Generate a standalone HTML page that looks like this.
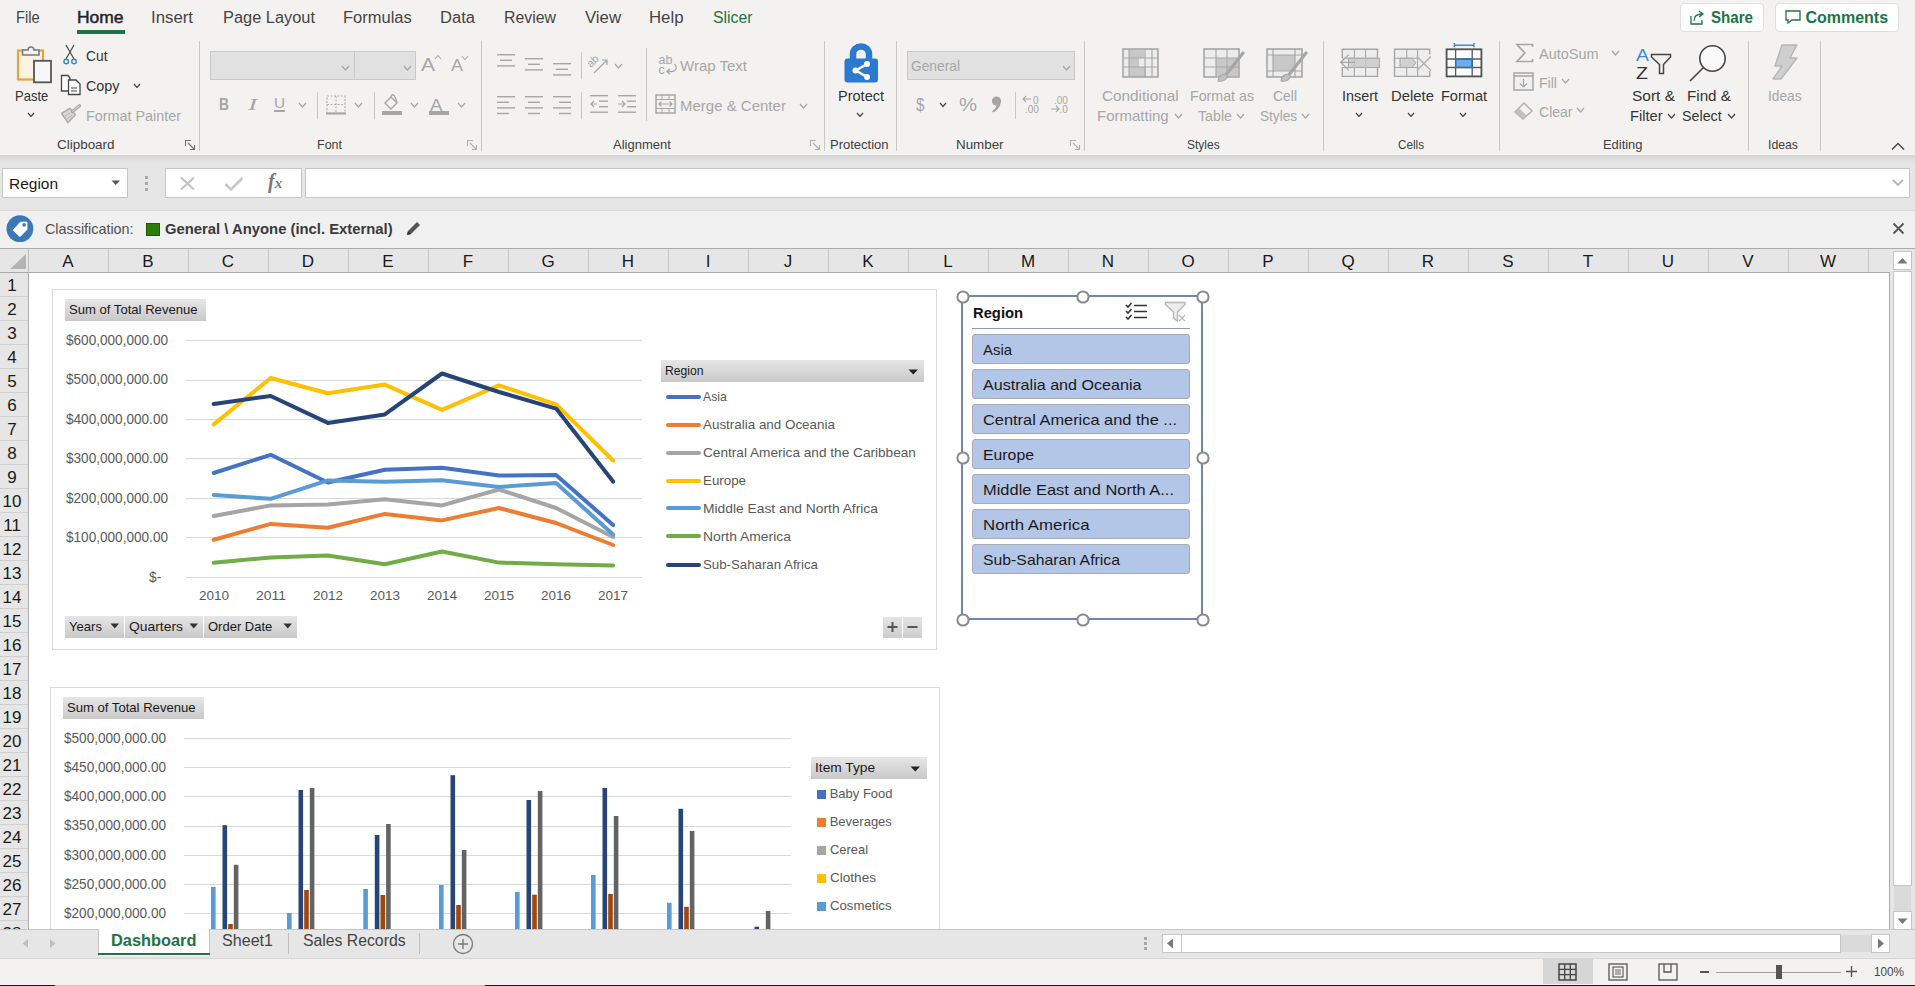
<!DOCTYPE html><html><head><meta charset="utf-8"><style>
html,body{margin:0;padding:0;width:1915px;height:986px;overflow:hidden;background:#fff;}
body{position:relative;font-family:"Liberation Sans",sans-serif;}
div,svg{position:absolute;box-sizing:border-box;}
.t{white-space:nowrap;}
</style></head><body>
<div style="left:0px;top:0px;width:1915px;height:155px;background:#f3f2f1;"></div>
<div style="left:0px;top:155px;width:1915px;height:56px;background:linear-gradient(#d2d2d2 0px,#dedede 4px,#e6e6e6 9px,#e6e6e6 100%);"></div>
<div style="left:0px;top:210px;width:1915px;height:38px;background:#f0f0f0;border-top:1px solid #dadada;"></div>
<div style="left:0px;top:248px;width:1915px;height:25px;background:#e6e6e6;border-top:1px solid #ababab;"></div>
<div style="left:28px;top:272px;width:1862px;height:658px;background:#fff;"></div>
<div style="left:0px;top:272px;width:28px;height:658px;background:#e6e6e6;"></div>
<div style="left:1889px;top:249px;width:26px;height:681px;background:#e6e6e6;"></div>
<div class="t" style="left:16.30px;top:8.52px;font-size:16px;line-height:18.38px;color:#444444;font-weight:400;transform:scaleX(0.9186);transform-origin:0 0;">File</div>
<div class="t" style="left:151.00px;top:8.52px;font-size:16px;line-height:18.38px;color:#444444;font-weight:400;transform:scaleX(1.0500);transform-origin:0 0;">Insert</div>
<div class="t" style="left:222.50px;top:8.52px;font-size:16px;line-height:18.38px;color:#444444;font-weight:400;transform:scaleX(1.0234);transform-origin:0 0;">Page Layout</div>
<div class="t" style="left:343.00px;top:8.52px;font-size:16px;line-height:18.38px;color:#444444;font-weight:400;transform:scaleX(1.0315);transform-origin:0 0;">Formulas</div>
<div class="t" style="left:440.00px;top:8.52px;font-size:16px;line-height:18.38px;color:#444444;font-weight:400;transform:scaleX(1.0355);transform-origin:0 0;">Data</div>
<div class="t" style="left:504.00px;top:8.52px;font-size:16px;line-height:18.38px;color:#444444;font-weight:400;transform:scaleX(0.9905);transform-origin:0 0;">Review</div>
<div class="t" style="left:585.00px;top:8.52px;font-size:16px;line-height:18.38px;color:#444444;font-weight:400;transform:scaleX(1.0465);transform-origin:0 0;">View</div>
<div class="t" style="left:649.00px;top:8.52px;font-size:16px;line-height:18.38px;color:#444444;font-weight:400;transform:scaleX(1.0486);transform-origin:0 0;">Help</div>
<div class="t" style="left:77.00px;top:8.52px;font-size:16px;line-height:18.38px;color:#262626;font-weight:400;transform:scaleX(1.0913);transform-origin:0 0;-webkit-text-stroke:0.45px #262626;">Home</div>
<div style="left:77px;top:30px;width:48px;height:4px;background:#217346;"></div>
<div class="t" style="left:712.60px;top:8.52px;font-size:16px;line-height:18.38px;color:#217346;font-weight:400;transform:scaleX(0.9850);transform-origin:0 0;">Slicer</div>
<div style="left:1680px;top:3px;width:84px;height:29px;background:#fff;border:1px solid #e1dfdd;border-radius:4px;"></div>
<div class="t" style="left:1710.70px;top:8.52px;font-size:16px;line-height:18.38px;color:#217346;font-weight:700;transform:scaleX(0.9438);transform-origin:0 0;">Share</div>
<svg style="left:1688px;top:8px;" width="18" height="18" viewBox="0 0 18 18"><path d="M3 8 V16 H14 V12" fill="none" stroke="#217346" stroke-width="1.3"/><path d="M6 13 C6 8 9 6 14 6 M11 3 L15 6 L11 9" fill="none" stroke="#217346" stroke-width="1.3"/></svg>
<div style="left:1775px;top:3px;width:124px;height:29px;background:#fff;border:1px solid #e1dfdd;border-radius:4px;"></div>
<div class="t" style="left:1805.40px;top:8.52px;font-size:16px;line-height:18.38px;color:#217346;font-weight:700;">Comments</div>
<svg style="left:1784px;top:8px;" width="18" height="18" viewBox="0 0 18 18"><path d="M2 3 H16 V12 H8 L4 15 V12 H2 Z" fill="none" stroke="#217346" stroke-width="1.3"/></svg>
<div style="left:199px;top:41px;width:1px;height:110px;background:#c8c6c4;"></div>
<div style="left:481px;top:41px;width:1px;height:110px;background:#c8c6c4;"></div>
<div style="left:824px;top:41px;width:1px;height:110px;background:#c8c6c4;"></div>
<div style="left:896px;top:41px;width:1px;height:110px;background:#c8c6c4;"></div>
<div style="left:1084px;top:41px;width:1px;height:110px;background:#c8c6c4;"></div>
<div style="left:1323px;top:41px;width:1px;height:110px;background:#c8c6c4;"></div>
<div style="left:1499px;top:41px;width:1px;height:110px;background:#c8c6c4;"></div>
<div style="left:1748px;top:41px;width:1px;height:110px;background:#c8c6c4;"></div>
<div style="left:1820px;top:41px;width:1px;height:110px;background:#c8c6c4;"></div>
<svg style="left:14px;top:43px;" width="40" height="42" viewBox="0 0 40 42"><rect x="4" y="7.5" width="25" height="29" fill="#fdf3e3" stroke="#e8a33d" stroke-width="2.2"/>
<path d="M8.5 12 V7 H14 A3 3 0 0 1 20 7 H25 V12 Z" fill="#f3f2f1" stroke="#7a7a7a" stroke-width="1.6"/>
<rect x="20" y="17.8" width="17" height="21.5" fill="#f7f7f7" stroke="#555" stroke-width="1.8"/></svg>
<div class="t" style="left:14.50px;top:87.42px;font-size:15px;line-height:17.23px;color:#333333;font-weight:400;transform:scaleX(0.8672);transform-origin:0 0;">Paste</div>
<svg style="left:26.5px;top:111.5px;" width="8" height="5.5" viewBox="0 0 8 5.5"><path d="M1 1 L4.0 4.5 L7 1" fill="none" stroke="#444" stroke-width="1.2"/></svg>
<svg style="left:62px;top:44px;" width="18" height="22" viewBox="0 0 18 22"><path d="M4 1 L12 15 M12 1 L4 15" stroke="#444" stroke-width="1.2" fill="none"/>
<circle cx="4.2" cy="17.5" r="2.3" fill="none" stroke="#3a87c8" stroke-width="1.4"/>
<circle cx="12" cy="17.5" r="2.3" fill="none" stroke="#3a87c8" stroke-width="1.4"/></svg>
<div class="t" style="left:85.50px;top:47.42px;font-size:15px;line-height:17.23px;color:#333333;font-weight:400;transform:scaleX(0.9227);transform-origin:0 0;">Cut</div>
<svg style="left:60px;top:74px;" width="22" height="22" viewBox="0 0 22 22"><path d="M1.5 1.5 H8 L10 4 V17 H1.5 Z" fill="#fff" stroke="#444" stroke-width="1.3"/>
<path d="M8.5 6 H16 L20 10 V20.5 H8.5 Z" fill="#fff" stroke="#444" stroke-width="1.3"/>
<path d="M11 14 H17 M11 17 H17" stroke="#444" stroke-width="1.1"/></svg>
<div class="t" style="left:85.50px;top:77.42px;font-size:15px;line-height:17.23px;color:#333333;font-weight:400;transform:scaleX(0.9571);transform-origin:0 0;">Copy</div>
<svg style="left:132.5px;top:82.5px;" width="8" height="5.5" viewBox="0 0 8 5.5"><path d="M1 1 L4.0 4.5 L7 1" fill="none" stroke="#444" stroke-width="1.2"/></svg>
<svg style="left:60px;top:103px;" width="23" height="21" viewBox="0 0 23 21"><path d="M1.6 10.4 L9.8 5.3 L15.5 11.6 L8 19.8 Z" fill="#d6d6d6" stroke="#a6a6a6" stroke-width="1.3" stroke-linejoin="round"/>
<path d="M4.5 13.5 L10.5 9.5 M6.5 16.5 L12.5 12" stroke="#b4b4b4" stroke-width="1"/>
<path d="M12.5 8.5 L19.5 2.8" stroke="#a6a6a6" stroke-width="3.2" stroke-linecap="round"/>
<path d="M12.8 8.2 L19.3 3" stroke="#e6e6e6" stroke-width="1" stroke-linecap="round"/></svg>
<div class="t" style="left:85.50px;top:107.42px;font-size:15px;line-height:17.23px;color:#a6a6a6;font-weight:400;transform:scaleX(0.9577);transform-origin:0 0;">Format Painter</div>
<div class="t" style="left:57.05px;top:137.74px;font-size:13px;line-height:14.94px;color:#404040;font-weight:400;transform:scaleX(1.0342);transform-origin:0 0;">Clipboard</div>
<svg style="left:185px;top:140px;" width="11" height="11" viewBox="0 0 11 11"><path d="M0.5 6 V0.5 H6 M3 3 L9.5 9.5 M5 9.5 H9.5 V5" fill="none" stroke="#707070" stroke-width="1.1"/></svg>
<div style="left:210px;top:51px;width:145px;height:29px;background:#e1e1e1;border:1px solid #c8c8c8;"></div>
<div style="left:354px;top:51px;width:62px;height:29px;background:#e1e1e1;border:1px solid #c8c8c8;"></div>
<svg style="left:341px;top:65px;" width="9" height="6" viewBox="0 0 9 6"><path d="M1 1 L4.5 5 L8 1" fill="none" stroke="#a6a6a6" stroke-width="1.2"/></svg>
<svg style="left:403px;top:65px;" width="9" height="6" viewBox="0 0 9 6"><path d="M1 1 L4.5 5 L8 1" fill="none" stroke="#a6a6a6" stroke-width="1.2"/></svg>
<div class="t" style="left:421.00px;top:54.30px;font-size:19px;line-height:21.83px;color:#a6a6a6;font-weight:400;transform:scaleX(1.1024);transform-origin:0 0;">A</div>
<svg style="left:434px;top:54px;" width="8" height="6" viewBox="0 0 8 6"><path d="M1 5 L4 1.5 L7 5" fill="none" stroke="#a6a6a6" stroke-width="1.1"/></svg>
<div class="t" style="left:451.00px;top:57.02px;font-size:16px;line-height:18.38px;color:#a6a6a6;font-weight:400;transform:scaleX(1.1215);transform-origin:0 0;">A</div>
<svg style="left:461px;top:55px;" width="8" height="6" viewBox="0 0 8 6"><path d="M1 1 L4 4.5 L7 1" fill="none" stroke="#a6a6a6" stroke-width="1.1"/></svg>
<div class="t" style="left:219.00px;top:95.52px;font-size:16px;line-height:18.38px;color:#a6a6a6;font-weight:700;transform:scaleX(0.8621);transform-origin:0 0;">B</div>
<div class="t" style="left:248.00px;top:95.52px;font-size:16px;line-height:18.38px;color:#a6a6a6;font-weight:400;transform:scaleX(1.7273);transform-origin:0 0;font-style:italic;font-family:'Liberation Serif',serif;">I</div>
<div class="t" style="left:274.00px;top:94.42px;font-size:15px;line-height:17.23px;color:#a6a6a6;font-weight:400;transform:scaleX(1.0185);transform-origin:0 0;">U</div>
<div style="left:274px;top:110px;width:11px;height:1.5px;background:#a6a6a6;"></div>
<svg style="left:298px;top:102px;" width="9" height="6" viewBox="0 0 9 6"><path d="M1 1 L4.5 5 L8 1" fill="none" stroke="#a6a6a6" stroke-width="1.2"/></svg>
<div style="left:317px;top:92px;width:1px;height:27px;background:#c8c6c4;"></div>
<svg style="left:326px;top:95px;" width="20" height="20" viewBox="0 0 20 20"><rect x="1" y="1" width="18" height="17" fill="none" stroke="#b0b0b0" stroke-width="1.2" stroke-dasharray="2 1.5"/>
<path d="M10 1 V18 M1 9.5 H19" stroke="#b0b0b0" stroke-width="1" stroke-dasharray="2 1.5"/>
<path d="M0 18.5 H20" stroke="#a6a6a6" stroke-width="2"/></svg>
<svg style="left:354px;top:102px;" width="9" height="6" viewBox="0 0 9 6"><path d="M1 1 L4.5 5 L8 1" fill="none" stroke="#a6a6a6" stroke-width="1.2"/></svg>
<div style="left:373.5px;top:92px;width:1px;height:27px;background:#c8c6c4;"></div>
<svg style="left:381px;top:93px;" width="22" height="23" viewBox="0 0 22 23"><path d="M4 10 L10 4 L16 10 L10 16 Z" fill="none" stroke="#a6a6a6" stroke-width="1.4"/>
<path d="M10 4 C10 1 13 1 14 4 L16 9" fill="none" stroke="#a6a6a6" stroke-width="1.3"/>
<rect x="1" y="18" width="20" height="4" fill="#a6a6a6"/></svg>
<svg style="left:410px;top:102px;" width="9" height="6" viewBox="0 0 9 6"><path d="M1 1 L4.5 5 L8 1" fill="none" stroke="#a6a6a6" stroke-width="1.2"/></svg>
<div class="t" style="left:429.50px;top:95.61px;font-size:17px;line-height:19.53px;color:#a6a6a6;font-weight:400;transform:scaleX(1.0965);transform-origin:0 0;">A</div>
<div style="left:429px;top:111px;width:20px;height:4px;background:#a6a6a6;"></div>
<svg style="left:457px;top:102px;" width="9" height="6" viewBox="0 0 9 6"><path d="M1 1 L4.5 5 L8 1" fill="none" stroke="#a6a6a6" stroke-width="1.2"/></svg>
<div class="t" style="left:317.00px;top:137.74px;font-size:13px;line-height:14.94px;color:#404040;font-weight:400;transform:scaleX(0.9615);transform-origin:0 0;">Font</div>
<svg style="left:467px;top:140px;" width="11" height="11" viewBox="0 0 11 11"><path d="M0.5 6 V0.5 H6 M3 3 L9.5 9.5 M5 9.5 H9.5 V5" fill="none" stroke="#b0b0b0" stroke-width="1.1"/></svg>
<svg style="left:497px;top:54px;" width="18" height="18.799999999999997" viewBox="0 0 18 18.799999999999997"><rect x="0.0" y="0.0" width="18" height="1.4" fill="#a6a6a6"/><rect x="3.0" y="5.6" width="12" height="1.4" fill="#a6a6a6"/><rect x="0.0" y="11.2" width="18" height="1.4" fill="#a6a6a6"/></svg>
<svg style="left:525px;top:58px;" width="18" height="18.799999999999997" viewBox="0 0 18 18.799999999999997"><rect x="0.0" y="0.0" width="18" height="1.4" fill="#a6a6a6"/><rect x="3.0" y="5.6" width="12" height="1.4" fill="#a6a6a6"/><rect x="0.0" y="11.2" width="18" height="1.4" fill="#a6a6a6"/></svg>
<svg style="left:553px;top:63px;" width="18" height="18.799999999999997" viewBox="0 0 18 18.799999999999997"><rect x="0.0" y="0.0" width="18" height="1.4" fill="#a6a6a6"/><rect x="3.0" y="5.6" width="12" height="1.4" fill="#a6a6a6"/><rect x="0.0" y="11.2" width="18" height="1.4" fill="#a6a6a6"/></svg>
<div style="left:580.5px;top:52px;width:1px;height:27px;background:#c8c6c4;"></div>
<svg style="left:588px;top:54px;" width="22" height="20" viewBox="0 0 22 20"><text x="0" y="0" font-size="11" fill="#a6a6a6" font-family="Liberation Sans" transform="translate(3,14) rotate(-45)">ab</text>
<path d="M6 19 L19 6 M14 6 H19 V11" fill="none" stroke="#a6a6a6" stroke-width="1.2"/></svg>
<svg style="left:614px;top:62.5px;" width="9" height="6" viewBox="0 0 9 6"><path d="M1 1 L4.5 5 L8 1" fill="none" stroke="#a6a6a6" stroke-width="1.2"/></svg>
<div style="left:646px;top:48px;width:1px;height:73px;background:#c8c6c4;"></div>
<svg style="left:658px;top:54px;" width="20" height="22" viewBox="0 0 20 22"><text x="0.5" y="10" font-size="12.5" fill="#a6a6a6" font-family="Liberation Sans">ab</text>
<text x="0.5" y="19.5" font-size="12.5" fill="#a6a6a6" font-family="Liberation Sans">c</text>
<path d="M16.5 10 C19.5 13 18.5 17.5 13.5 17.5 H9 M11.8 14.8 L9 17.5 L11.8 20.2" fill="none" stroke="#a6a6a6" stroke-width="1.3"/></svg>
<div class="t" style="left:680.00px;top:57.42px;font-size:15px;line-height:17.23px;color:#a6a6a6;font-weight:400;">Wrap Text</div>
<svg style="left:497px;top:95.5px;" width="18" height="24.4" viewBox="0 0 18 24.4"><rect x="0" y="0.0" width="18" height="1.4" fill="#a6a6a6"/><rect x="0" y="5.6" width="12" height="1.4" fill="#a6a6a6"/><rect x="0" y="11.2" width="18" height="1.4" fill="#a6a6a6"/><rect x="0" y="16.8" width="12" height="1.4" fill="#a6a6a6"/></svg>
<svg style="left:525px;top:95.5px;" width="18" height="24.4" viewBox="0 0 18 24.4"><rect x="0.0" y="0.0" width="18" height="1.4" fill="#a6a6a6"/><rect x="3.0" y="5.6" width="12" height="1.4" fill="#a6a6a6"/><rect x="0.0" y="11.2" width="18" height="1.4" fill="#a6a6a6"/><rect x="3.0" y="16.8" width="12" height="1.4" fill="#a6a6a6"/></svg>
<svg style="left:553px;top:95.5px;" width="18" height="24.4" viewBox="0 0 18 24.4"><rect x="0" y="0.0" width="18" height="1.4" fill="#a6a6a6"/><rect x="6" y="5.6" width="12" height="1.4" fill="#a6a6a6"/><rect x="0" y="11.2" width="18" height="1.4" fill="#a6a6a6"/><rect x="6" y="16.8" width="12" height="1.4" fill="#a6a6a6"/></svg>
<div style="left:580.5px;top:92px;width:1px;height:27px;background:#c8c6c4;"></div>
<svg style="left:590px;top:95px;" width="19" height="19" viewBox="0 0 19 19"><rect x="0" y="0" width="18" height="1.4" fill="#a6a6a6"/><rect x="0" y="16.5" width="18" height="1.4" fill="#a6a6a6"/>
<rect x="9" y="5.5" width="9" height="1.4" fill="#a6a6a6"/><rect x="9" y="11" width="9" height="1.4" fill="#a6a6a6"/>
<path d="M7 9 H1 M4 6 L1 9 L4 12" fill="none" stroke="#a6a6a6" stroke-width="1.2"/></svg>
<svg style="left:618px;top:95px;" width="19" height="19" viewBox="0 0 19 19"><rect x="0" y="0" width="18" height="1.4" fill="#a6a6a6"/><rect x="0" y="16.5" width="18" height="1.4" fill="#a6a6a6"/>
<rect x="9" y="5.5" width="9" height="1.4" fill="#a6a6a6"/><rect x="9" y="11" width="9" height="1.4" fill="#a6a6a6"/>
<path d="M0 9 H7 M4 6 L7 9 L4 12" fill="none" stroke="#a6a6a6" stroke-width="1.2"/></svg>
<svg style="left:655px;top:94px;" width="21" height="21" viewBox="0 0 21 21"><rect x="1" y="1" width="19" height="18" fill="none" stroke="#a6a6a6" stroke-width="1.5"/>
<path d="M1 5.5 H20 M1 14.5 H20 M7 1 V5.5 M14 1 V5.5 M7 14.5 V19 M14 14.5 V19" stroke="#a6a6a6" stroke-width="1"/>
<path d="M4 10 H17 M6.5 7.5 L4 10 L6.5 12.5 M14.5 7.5 L17 10 L14.5 12.5" fill="none" stroke="#a6a6a6" stroke-width="1.2"/></svg>
<div class="t" style="left:680.00px;top:97.42px;font-size:15px;line-height:17.23px;color:#a6a6a6;font-weight:400;">Merge &amp; Center</div>
<svg style="left:799px;top:102.5px;" width="9" height="6" viewBox="0 0 9 6"><path d="M1 1 L4.5 5 L8 1" fill="none" stroke="#a6a6a6" stroke-width="1.2"/></svg>
<div class="t" style="left:613.00px;top:137.74px;font-size:13px;line-height:14.94px;color:#404040;font-weight:400;">Alignment</div>
<svg style="left:810px;top:140px;" width="11" height="11" viewBox="0 0 11 11"><path d="M0.5 6 V0.5 H6 M3 3 L9.5 9.5 M5 9.5 H9.5 V5" fill="none" stroke="#b0b0b0" stroke-width="1.1"/></svg>
<svg style="left:843px;top:42px;" width="36" height="42" viewBox="0 0 36 42"><path d="M10 18 V12 A8 7.5 0 0 1 26 12 V18" fill="none" stroke="#2b79d0" stroke-width="6.5"/>
<rect x="1.5" y="16.5" width="33.5" height="24" rx="3" fill="#2b79d0"/>
<path d="M24 22 L13 28.5 L24 35" fill="none" stroke="#fff" stroke-width="2.6"/>
<circle cx="24" cy="22" r="3" fill="#fff"/><circle cx="24" cy="35" r="3" fill="#fff"/><circle cx="12.5" cy="28.5" r="3" fill="#fff"/></svg>
<div class="t" style="left:837.50px;top:86.92px;font-size:15px;line-height:17.23px;color:#333333;font-weight:400;transform:scaleX(0.9684);transform-origin:0 0;">Protect</div>
<svg style="left:856px;top:111.5px;" width="8" height="5.5" viewBox="0 0 8 5.5"><path d="M1 1 L4.0 4.5 L7 1" fill="none" stroke="#444" stroke-width="1.2"/></svg>
<div class="t" style="left:830.00px;top:137.74px;font-size:13px;line-height:14.94px;color:#404040;font-weight:400;">Protection</div>
<div style="left:907px;top:51px;width:168px;height:29px;background:#e1e1e1;border:1px solid #c8c8c8;"></div>
<div class="t" style="left:910.60px;top:57.42px;font-size:15px;line-height:17.23px;color:#a6a6a6;font-weight:400;transform:scaleX(0.9176);transform-origin:0 0;">General</div>
<svg style="left:1062px;top:65px;" width="9" height="6" viewBox="0 0 9 6"><path d="M1 1 L4.5 5 L8 1" fill="none" stroke="#a6a6a6" stroke-width="1.2"/></svg>
<div class="t" style="left:916.00px;top:93.81px;font-size:19px;line-height:21.83px;color:#a6a6a6;font-weight:400;transform:scaleX(0.8019);transform-origin:0 0;">$</div>
<svg style="left:939px;top:102px;" width="8" height="5.5" viewBox="0 0 8 5.5"><path d="M1 1 L4.0 4.5 L7 1" fill="none" stroke="#444" stroke-width="1.2"/></svg>
<div class="t" style="left:959.00px;top:93.81px;font-size:19px;line-height:21.83px;color:#a6a6a6;font-weight:400;transform:scaleX(1.0651);transform-origin:0 0;">%</div>
<svg style="left:990px;top:95px;" width="13" height="19" viewBox="0 0 13 19"><circle cx="6.5" cy="6" r="4.6" fill="#a6a6a6"/><path d="M10.6 6.5 C10.8 11 8 15.5 3 17.5 L2.2 16 C5.5 14 7 11 6.5 8 Z" fill="#a6a6a6"/></svg>
<div style="left:1014.5px;top:92px;width:1px;height:27px;background:#c8c6c4;"></div>
<svg style="left:1022px;top:94px;" width="21" height="20" viewBox="0 0 21 20"><path d="M9 5 H1 M4 2 L1 5 L4 8" fill="none" stroke="#a6a6a6" stroke-width="1.1"/>
<text x="11" y="9.5" font-size="10" fill="#a6a6a6" font-family="Liberation Sans">0</text>
<text x="3" y="19" font-size="10" fill="#a6a6a6" font-family="Liberation Sans">.00</text></svg>
<svg style="left:1050px;top:94px;" width="21" height="20" viewBox="0 0 21 20"><text x="4" y="9.5" font-size="10" fill="#a6a6a6" font-family="Liberation Sans">.00</text>
<path d="M1 15 H9 M6 12 L9 15 L6 18" fill="none" stroke="#a6a6a6" stroke-width="1.1"/>
<text x="9.5" y="19" font-size="10" fill="#a6a6a6" font-family="Liberation Sans">.0</text></svg>
<div class="t" style="left:955.95px;top:137.74px;font-size:13px;line-height:14.94px;color:#404040;font-weight:400;transform:scaleX(1.0281);transform-origin:0 0;">Number</div>
<svg style="left:1070px;top:140px;" width="11" height="11" viewBox="0 0 11 11"><path d="M0.5 6 V0.5 H6 M3 3 L9.5 9.5 M5 9.5 H9.5 V5" fill="none" stroke="#b0b0b0" stroke-width="1.1"/></svg>
<svg style="left:1122px;top:48px;" width="37" height="30" viewBox="0 0 37 30"><rect x="1" y="1" width="35" height="28" fill="#ececec"/><rect x="7" y="2" width="15" height="8" fill="#c8c8c8"/><rect x="7" y="10" width="10" height="9" fill="#c8c8c8"/><rect x="7" y="19" width="17" height="10" fill="#c8c8c8"/><rect x="1" y="1" width="35" height="28" fill="none" stroke="#a6a6a6" stroke-width="1.6"/><path d="M7 1 V29" stroke="#a6a6a6" stroke-width="1.1"/><path d="M23 1 V29" stroke="#a6a6a6" stroke-width="1.1"/><path d="M30 1 V29" stroke="#a6a6a6" stroke-width="1.1"/><path d="M1 10 H36" stroke="#a6a6a6" stroke-width="1.1"/><path d="M1 19 H36" stroke="#a6a6a6" stroke-width="1.1"/></svg>
<div class="t" style="left:1102.00px;top:87.42px;font-size:15px;line-height:17.23px;color:#a6a6a6;font-weight:400;transform:scaleX(1.0200);transform-origin:0 0;">Conditional</div>
<div class="t" style="left:1097.00px;top:107.42px;font-size:15px;line-height:17.23px;color:#a6a6a6;font-weight:400;">Formatting</div>
<svg style="left:1174px;top:113px;" width="9" height="6" viewBox="0 0 9 6"><path d="M1 1 L4.5 5 L8 1" fill="none" stroke="#a6a6a6" stroke-width="1.2"/></svg>
<svg style="left:1203px;top:48px;" width="42" height="36" viewBox="0 0 42 36"><rect x="1" y="1" width="35" height="28" fill="#ececec"/><rect x="13" y="10" width="22" height="18" fill="#c8c8c8"/><rect x="1" y="1" width="35" height="28" fill="none" stroke="#a6a6a6" stroke-width="1.6"/><path d="M13 1 V29" stroke="#a6a6a6" stroke-width="1.1"/><path d="M24 1 V29" stroke="#a6a6a6" stroke-width="1.1"/><path d="M1 10 H36" stroke="#a6a6a6" stroke-width="1.1"/><path d="M1 19 H36" stroke="#a6a6a6" stroke-width="1.1"/><path d="M40 5 L22 28" stroke="#a6a6a6" stroke-width="3.2" stroke-linecap="round"/><path d="M15 33 C16 27 20 25 24 27 C25 31 21 34 15 33Z" fill="#c0c0c0" stroke="#a6a6a6" stroke-width="1.1"/></svg>
<div class="t" style="left:1189.70px;top:87.42px;font-size:15px;line-height:17.23px;color:#a6a6a6;font-weight:400;transform:scaleX(0.9481);transform-origin:0 0;">Format as</div>
<div class="t" style="left:1197.50px;top:107.42px;font-size:15px;line-height:17.23px;color:#a6a6a6;font-weight:400;transform:scaleX(0.9471);transform-origin:0 0;">Table</div>
<svg style="left:1236px;top:113px;" width="9" height="6" viewBox="0 0 9 6"><path d="M1 1 L4.5 5 L8 1" fill="none" stroke="#a6a6a6" stroke-width="1.2"/></svg>
<svg style="left:1266px;top:48px;" width="42" height="36" viewBox="0 0 42 36"><rect x="1" y="1" width="35" height="28" fill="#ececec"/><rect x="7" y="7" width="22" height="16" fill="#c8c8c8"/><rect x="1" y="1" width="35" height="28" fill="none" stroke="#a6a6a6" stroke-width="1.6"/><path d="M7 1 V29" stroke="#a6a6a6" stroke-width="1.1"/><path d="M29 1 V29" stroke="#a6a6a6" stroke-width="1.1"/><path d="M1 7 H36" stroke="#a6a6a6" stroke-width="1.1"/><path d="M1 23 H36" stroke="#a6a6a6" stroke-width="1.1"/><path d="M40 5 L22 28" stroke="#a6a6a6" stroke-width="3.2" stroke-linecap="round"/><path d="M15 33 C16 27 20 25 24 27 C25 31 21 34 15 33Z" fill="#c0c0c0" stroke="#a6a6a6" stroke-width="1.1"/></svg>
<div class="t" style="left:1273.00px;top:87.42px;font-size:15px;line-height:17.23px;color:#a6a6a6;font-weight:400;transform:scaleX(0.9302);transform-origin:0 0;">Cell</div>
<div class="t" style="left:1259.50px;top:107.42px;font-size:15px;line-height:17.23px;color:#a6a6a6;font-weight:400;transform:scaleX(0.9069);transform-origin:0 0;">Styles</div>
<svg style="left:1301px;top:113px;" width="9" height="6" viewBox="0 0 9 6"><path d="M1 1 L4.5 5 L8 1" fill="none" stroke="#a6a6a6" stroke-width="1.2"/></svg>
<div class="t" style="left:1186.95px;top:137.74px;font-size:13px;line-height:14.94px;color:#404040;font-weight:400;transform:scaleX(0.9237);transform-origin:0 0;">Styles</div>
<svg style="left:1335px;top:40px;" width="155" height="45" viewBox="0 0 155 45"><rect x="7.3" y="9.3" width="35.2" height="27.1" fill="#ededed"/>
<path d="M7.3 18.2 V9.3 H42.5 V36.4 H7.3 V27.5" fill="none" stroke="#a6a6a6" stroke-width="1.4"/>
<path d="M19.4 9.3 V36.4 M30.6 9.3 V36.4 M7.3 18.2 H42.5 M7.3 27.5 H42.5" stroke="#a6a6a6" stroke-width="1.1"/>
<rect x="13.4" y="18.2" width="31" height="9.3" fill="#d0d0d0" stroke="#a6a6a6" stroke-width="1"/>
<path d="M30.6 18.2 V27.5 M19.4 18.2 V27.5" stroke="#bdbdbd" stroke-width="1"/>
<path d="M13.8 14.6 L5.7 22.3 L13.8 30.4 M5.7 22.3 H20" fill="none" stroke="#a6a6a6" stroke-width="1.3"/>
<rect x="59.5" y="9.3" width="35.2" height="27.1" fill="#ededed"/>
<path d="M94.7 14.5 V9.3 H59.5 V36.4 H94.7 V31" fill="none" stroke="#a6a6a6" stroke-width="1.4"/>
<path d="M71.7 9.3 V36.4 M82.6 9.3 V36.4 M59.5 18.2 H82 M59.5 27.5 H82" stroke="#a6a6a6" stroke-width="1.1"/>
<path d="M65 18.2 H77 L81 22.85 L77 27.5 H65 Z" fill="#d0d0d0" stroke="#a6a6a6" stroke-width="1"/>
<path d="M81.8 16.6 L96 30.4 M96 16.6 L81.8 30.4" stroke="#b0b0b0" stroke-width="1.4"/>
<rect x="111.6" y="9.3" width="34.8" height="27.1" fill="#fff"/>
<rect x="120.6" y="19" width="16.6" height="8.5" fill="#6aaef0"/>
<path d="M120.6 9.3 V36.4 M137.2 9.3 V36.4 M111.6 19 H146.4 M111.6 27.5 H146.4" stroke="#5a5a5a" stroke-width="1.3"/>
<rect x="120.6" y="19" width="16.6" height="8.5" fill="none" stroke="#2f6fb5" stroke-width="1.3"/>
<rect x="111.6" y="9.3" width="34.8" height="27.1" fill="none" stroke="#505050" stroke-width="1.8"/>
<path d="M119.4 5.2 H138.9 M119.4 3 V7.2 M138.9 3 V7.2" stroke="#3d8ad6" stroke-width="1.5"/></svg>
<div class="t" style="left:1342.00px;top:87.42px;font-size:15px;line-height:17.23px;color:#333333;font-weight:400;transform:scaleX(0.9600);transform-origin:0 0;">Insert</div>
<svg style="left:1355px;top:111.5px;" width="8" height="5.5" viewBox="0 0 8 5.5"><path d="M1 1 L4.0 4.5 L7 1" fill="none" stroke="#444" stroke-width="1.2"/></svg>
<div class="t" style="left:1390.50px;top:87.42px;font-size:15px;line-height:17.23px;color:#333333;font-weight:400;transform:scaleX(0.9908);transform-origin:0 0;">Delete</div>
<svg style="left:1407px;top:111.5px;" width="8" height="5.5" viewBox="0 0 8 5.5"><path d="M1 1 L4.0 4.5 L7 1" fill="none" stroke="#444" stroke-width="1.2"/></svg>
<div class="t" style="left:1440.60px;top:87.42px;font-size:15px;line-height:17.23px;color:#333333;font-weight:400;transform:scaleX(0.9684);transform-origin:0 0;">Format</div>
<svg style="left:1459px;top:111.5px;" width="8" height="5.5" viewBox="0 0 8 5.5"><path d="M1 1 L4.0 4.5 L7 1" fill="none" stroke="#444" stroke-width="1.2"/></svg>
<div class="t" style="left:1397.50px;top:137.74px;font-size:13px;line-height:14.94px;color:#404040;font-weight:400;transform:scaleX(0.8997);transform-origin:0 0;">Cells</div>
<svg style="left:1515px;top:43px;" width="19" height="20" viewBox="0 0 19 20"><path d="M17.5 4 V1.5 H2 L9.8 10 L2 18.5 H17.5 V16" fill="none" stroke="#a6a6a6" stroke-width="1.7" stroke-linejoin="miter"/></svg>
<div class="t" style="left:1538.50px;top:45.42px;font-size:15px;line-height:17.23px;color:#a6a6a6;font-weight:400;transform:scaleX(0.9643);transform-origin:0 0;">AutoSum</div>
<svg style="left:1611px;top:50px;" width="9" height="6" viewBox="0 0 9 6"><path d="M1 1 L4.5 5 L8 1" fill="none" stroke="#a6a6a6" stroke-width="1.2"/></svg>
<svg style="left:1513px;top:72px;" width="22" height="20" viewBox="0 0 22 20"><rect x="1" y="1" width="19" height="17" fill="#f0f0f0" stroke="#a6a6a6" stroke-width="1.5"/>
<path d="M1 4 H20" stroke="#a6a6a6" stroke-width="1.5"/><path d="M10.5 7 V15 M7 11.5 L10.5 15 L14 11.5" fill="none" stroke="#a6a6a6" stroke-width="1.2"/></svg>
<div class="t" style="left:1538.50px;top:74.42px;font-size:15px;line-height:17.23px;color:#a6a6a6;font-weight:400;transform:scaleX(0.9375);transform-origin:0 0;">Fill</div>
<svg style="left:1561px;top:78px;" width="9" height="6" viewBox="0 0 9 6"><path d="M1 1 L4.5 5 L8 1" fill="none" stroke="#a6a6a6" stroke-width="1.2"/></svg>
<svg style="left:1513px;top:99.5px;" width="22" height="20" viewBox="0 0 22 20"><path d="M2 12 L11 3 L19 11 L10 19 Z" fill="none" stroke="#b0b0b0" stroke-width="1.5"/>
<path d="M2 12 L6 8 L14 16 L10 19 Z" fill="#c0c0c0"/></svg>
<div class="t" style="left:1538.50px;top:103.42px;font-size:15px;line-height:17.23px;color:#a6a6a6;font-weight:400;transform:scaleX(0.9358);transform-origin:0 0;">Clear</div>
<svg style="left:1576px;top:107px;" width="9" height="6" viewBox="0 0 9 6"><path d="M1 1 L4.5 5 L8 1" fill="none" stroke="#a6a6a6" stroke-width="1.2"/></svg>
<div class="t" style="left:1636.00px;top:47.02px;font-size:16px;line-height:18.38px;color:#3d8ad6;font-weight:400;transform:scaleX(1.2150);transform-origin:0 0;">A</div>
<div class="t" style="left:1636.00px;top:65.02px;font-size:16px;line-height:18.38px;color:#333;font-weight:400;transform:scaleX(1.2245);transform-origin:0 0;">Z</div>
<svg style="left:1650px;top:53px;" width="23" height="23" viewBox="0 0 23 23"><path d="M1.5 1.5 H20.5 V4 L13.5 11.5 V20.5 H9.5 V11.5 L1.5 4 Z" fill="none" stroke="#444" stroke-width="1.5"/></svg>
<div class="t" style="left:1632.00px;top:87.42px;font-size:15px;line-height:17.23px;color:#333333;font-weight:400;transform:scaleX(1.0312);transform-origin:0 0;">Sort &amp;</div>
<div class="t" style="left:1630.00px;top:107.42px;font-size:15px;line-height:17.23px;color:#333333;font-weight:400;transform:scaleX(0.9760);transform-origin:0 0;">Filter</div>
<svg style="left:1667px;top:113px;" width="9" height="6" viewBox="0 0 9 6"><path d="M1 1 L4.5 5 L8 1" fill="none" stroke="#444" stroke-width="1.2"/></svg>
<svg style="left:1688px;top:44px;" width="42" height="40" viewBox="0 0 42 40"><circle cx="24.5" cy="14.5" r="12.7" fill="#fafafa" stroke="#444" stroke-width="1.6"/><path d="M15.5 23.5 L2 37" stroke="#444" stroke-width="1.6"/></svg>
<div class="t" style="left:1687.00px;top:87.42px;font-size:15px;line-height:17.23px;color:#333333;font-weight:400;transform:scaleX(1.0138);transform-origin:0 0;">Find &amp;</div>
<div class="t" style="left:1682.00px;top:107.42px;font-size:15px;line-height:17.23px;color:#333333;font-weight:400;transform:scaleX(0.9520);transform-origin:0 0;">Select</div>
<svg style="left:1726.5px;top:113px;" width="9" height="6" viewBox="0 0 9 6"><path d="M1 1 L4.5 5 L8 1" fill="none" stroke="#444" stroke-width="1.2"/></svg>
<div class="t" style="left:1603.30px;top:137.74px;font-size:13px;line-height:14.94px;color:#404040;font-weight:400;transform:scaleX(0.9924);transform-origin:0 0;">Editing</div>
<svg style="left:1770px;top:43px;" width="30" height="39" viewBox="0 0 30 39"><path d="M12 2 H27 L20 15 H27 L11 36 H3 L12 23 H5 Z" fill="#cfcfcf" stroke="#b6b6b6" stroke-width="1.4" stroke-linejoin="round"/></svg>
<div class="t" style="left:1768.00px;top:87.42px;font-size:15px;line-height:17.23px;color:#a6a6a6;font-weight:400;transform:scaleX(0.9128);transform-origin:0 0;">Ideas</div>
<div class="t" style="left:1768.00px;top:137.74px;font-size:13px;line-height:14.94px;color:#404040;font-weight:400;transform:scaleX(0.9434);transform-origin:0 0;">Ideas</div>
<svg style="left:1891px;top:142px;" width="14" height="9" viewBox="0 0 14 9"><path d="M1 7.5 L7 1.5 L13 7.5" fill="none" stroke="#444" stroke-width="1.4"/></svg>
<div style="left:2px;top:168px;width:126px;height:30px;background:#fff;border:1px solid #c6c6c6;"></div>
<div class="t" style="left:8.60px;top:175.43px;font-size:15px;line-height:17.23px;color:#1a1a1a;font-weight:400;transform:scaleX(1.0316);transform-origin:0 0;">Region</div>
<svg style="left:111px;top:180px;" width="10" height="6" viewBox="0 0 10 6"><path d="M0.5 0.5 H9 L4.75 5 Z" fill="#555"/></svg>
<div style="left:145px;top:176px;width:3px;height:3px;background:#a8a8a8;"></div>
<div style="left:145px;top:182px;width:3px;height:3px;background:#a8a8a8;"></div>
<div style="left:145px;top:188px;width:3px;height:3px;background:#a8a8a8;"></div>
<div style="left:165px;top:168px;width:137px;height:30px;background:#fff;border:1px solid #c6c6c6;"></div>
<svg style="left:179px;top:176px;" width="18" height="15" viewBox="0 0 18 15"><path d="M2 1.5 L15 13.5 M15 1.5 L2 13.5" stroke="#c2c2c2" stroke-width="2.1"/></svg>
<svg style="left:224px;top:176px;" width="20" height="16" viewBox="0 0 20 16"><path d="M1.5 8 L7 13.5 L18.5 2" fill="none" stroke="#c8c8c8" stroke-width="2.6"/></svg>
<div class="t" style="left:268px;top:168px;font-size:20px;line-height:26px;color:#7a7a7a;font-style:italic;font-family:'Liberation Serif',serif;font-weight:700;">f<span style="font-size:15px;">x</span></div>
<div style="left:305px;top:168px;width:1605px;height:30px;background:#fff;border:1px solid #c6c6c6;"></div>
<svg style="left:1892px;top:179px;" width="12" height="8" viewBox="0 0 12 8"><path d="M1 1 L6 6 L11 1" fill="none" stroke="#b5b5b5" stroke-width="1.8"/></svg>
<svg style="left:6px;top:215px;" width="28" height="28" viewBox="0 0 28 28"><circle cx="13.9" cy="13.7" r="13.4" fill="#3b78b8"/><path d="M14.3 7.2 L21 7 L21 14.5 L13.9 21.8 L7 15.2 Z" fill="#fff" stroke="#fff" stroke-width="0.8" stroke-linejoin="round"/><circle cx="18.1" cy="9.9" r="1.8" fill="#3b78b8"/></svg>
<div class="t" style="left:45.00px;top:219.93px;font-size:15px;line-height:17.23px;color:#505050;font-weight:400;transform:scaleX(0.9568);transform-origin:0 0;">Classification:</div>
<div style="left:145.6px;top:222.5px;width:14px;height:13px;background:#2e7d0b;border:1px solid #1f5a06;"></div>
<div class="t" style="left:165.40px;top:219.93px;font-size:15px;line-height:17.23px;color:#3a3a3a;font-weight:700;transform:scaleX(0.9883);transform-origin:0 0;">General \ Anyone (incl. External)</div>
<svg style="left:404px;top:220px;" width="18" height="18" viewBox="0 0 18 18"><path d="M3 15 L4 11 L13 2 L16 5 L7 14 Z" fill="#555"/><path d="M3 15 L4 11 L7 14 Z" fill="#333"/></svg>
<svg style="left:1892px;top:222px;" width="13" height="13" viewBox="0 0 13 13"><path d="M1.5 1.5 L11.5 11.5 M11.5 1.5 L1.5 11.5" stroke="#555" stroke-width="1.8"/></svg>
<svg style="left:8px;top:253px;" width="19" height="17" viewBox="0 0 19 17"><path d="M18 1 V16 H2 Z" fill="#b4b4b4"/></svg>
<div style="left:28px;top:249px;width:1px;height:24px;background:#bdbdbd;"></div>
<div style="left:108px;top:249px;width:1px;height:23px;background:#c6c6c6;"></div>
<div class="t" style="left:62.30px;top:251.62px;font-size:17px;line-height:19.53px;color:#1a1a1a;font-weight:400;">A</div>
<div style="left:188px;top:249px;width:1px;height:23px;background:#c6c6c6;"></div>
<div class="t" style="left:142.35px;top:251.62px;font-size:17px;line-height:19.53px;color:#1a1a1a;font-weight:400;">B</div>
<div style="left:268px;top:249px;width:1px;height:23px;background:#c6c6c6;"></div>
<div class="t" style="left:221.85px;top:251.62px;font-size:17px;line-height:19.53px;color:#1a1a1a;font-weight:400;">C</div>
<div style="left:348px;top:249px;width:1px;height:23px;background:#c6c6c6;"></div>
<div class="t" style="left:301.85px;top:251.62px;font-size:17px;line-height:19.53px;color:#1a1a1a;font-weight:400;">D</div>
<div style="left:428px;top:249px;width:1px;height:23px;background:#c6c6c6;"></div>
<div class="t" style="left:382.35px;top:251.62px;font-size:17px;line-height:19.53px;color:#1a1a1a;font-weight:400;">E</div>
<div style="left:508px;top:249px;width:1px;height:23px;background:#c6c6c6;"></div>
<div class="t" style="left:462.80px;top:251.62px;font-size:17px;line-height:19.53px;color:#1a1a1a;font-weight:400;">F</div>
<div style="left:588px;top:249px;width:1px;height:23px;background:#c6c6c6;"></div>
<div class="t" style="left:541.40px;top:251.62px;font-size:17px;line-height:19.53px;color:#1a1a1a;font-weight:400;">G</div>
<div style="left:668px;top:249px;width:1px;height:23px;background:#c6c6c6;"></div>
<div class="t" style="left:621.85px;top:251.62px;font-size:17px;line-height:19.53px;color:#1a1a1a;font-weight:400;">H</div>
<div style="left:748px;top:249px;width:1px;height:23px;background:#c6c6c6;"></div>
<div class="t" style="left:705.65px;top:251.62px;font-size:17px;line-height:19.53px;color:#1a1a1a;font-weight:400;">I</div>
<div style="left:828px;top:249px;width:1px;height:23px;background:#c6c6c6;"></div>
<div class="t" style="left:783.75px;top:251.62px;font-size:17px;line-height:19.53px;color:#1a1a1a;font-weight:400;">J</div>
<div style="left:908px;top:249px;width:1px;height:23px;background:#c6c6c6;"></div>
<div class="t" style="left:862.35px;top:251.62px;font-size:17px;line-height:19.53px;color:#1a1a1a;font-weight:400;">K</div>
<div style="left:988px;top:249px;width:1px;height:23px;background:#c6c6c6;"></div>
<div class="t" style="left:943.25px;top:251.62px;font-size:17px;line-height:19.53px;color:#1a1a1a;font-weight:400;">L</div>
<div style="left:1068px;top:249px;width:1px;height:23px;background:#c6c6c6;"></div>
<div class="t" style="left:1020.90px;top:251.62px;font-size:17px;line-height:19.53px;color:#1a1a1a;font-weight:400;">M</div>
<div style="left:1148px;top:249px;width:1px;height:23px;background:#c6c6c6;"></div>
<div class="t" style="left:1101.85px;top:251.62px;font-size:17px;line-height:19.53px;color:#1a1a1a;font-weight:400;">N</div>
<div style="left:1228px;top:249px;width:1px;height:23px;background:#c6c6c6;"></div>
<div class="t" style="left:1181.40px;top:251.62px;font-size:17px;line-height:19.53px;color:#1a1a1a;font-weight:400;">O</div>
<div style="left:1308px;top:249px;width:1px;height:23px;background:#c6c6c6;"></div>
<div class="t" style="left:1262.35px;top:251.62px;font-size:17px;line-height:19.53px;color:#1a1a1a;font-weight:400;">P</div>
<div style="left:1388px;top:249px;width:1px;height:23px;background:#c6c6c6;"></div>
<div class="t" style="left:1341.40px;top:251.62px;font-size:17px;line-height:19.53px;color:#1a1a1a;font-weight:400;">Q</div>
<div style="left:1468px;top:249px;width:1px;height:23px;background:#c6c6c6;"></div>
<div class="t" style="left:1421.85px;top:251.62px;font-size:17px;line-height:19.53px;color:#1a1a1a;font-weight:400;">R</div>
<div style="left:1548px;top:249px;width:1px;height:23px;background:#c6c6c6;"></div>
<div class="t" style="left:1502.35px;top:251.62px;font-size:17px;line-height:19.53px;color:#1a1a1a;font-weight:400;">S</div>
<div style="left:1628px;top:249px;width:1px;height:23px;background:#c6c6c6;"></div>
<div class="t" style="left:1582.80px;top:251.62px;font-size:17px;line-height:19.53px;color:#1a1a1a;font-weight:400;">T</div>
<div style="left:1708px;top:249px;width:1px;height:23px;background:#c6c6c6;"></div>
<div class="t" style="left:1661.85px;top:251.62px;font-size:17px;line-height:19.53px;color:#1a1a1a;font-weight:400;">U</div>
<div style="left:1788px;top:249px;width:1px;height:23px;background:#c6c6c6;"></div>
<div class="t" style="left:1742.35px;top:251.62px;font-size:17px;line-height:19.53px;color:#1a1a1a;font-weight:400;">V</div>
<div style="left:1868px;top:249px;width:1px;height:23px;background:#c6c6c6;"></div>
<div class="t" style="left:1820.00px;top:251.62px;font-size:17px;line-height:19.53px;color:#1a1a1a;font-weight:400;">W</div>
<div style="left:0px;top:272px;width:1890px;height:1px;background:#ababab;"></div>
<div style="left:28px;top:272px;width:1px;height:657px;background:#ababab;"></div>
<div style="left:0px;top:296px;width:28px;height:1px;background:#d0d0d0;"></div>
<div class="t" style="left:7.25px;top:275.62px;font-size:17px;line-height:19.53px;color:#1a1a1a;font-weight:400;">1</div>
<div style="left:0px;top:320px;width:28px;height:1px;background:#d0d0d0;"></div>
<div class="t" style="left:7.25px;top:299.62px;font-size:17px;line-height:19.53px;color:#1a1a1a;font-weight:400;">2</div>
<div style="left:0px;top:344px;width:28px;height:1px;background:#d0d0d0;"></div>
<div class="t" style="left:7.25px;top:323.62px;font-size:17px;line-height:19.53px;color:#1a1a1a;font-weight:400;">3</div>
<div style="left:0px;top:368px;width:28px;height:1px;background:#d0d0d0;"></div>
<div class="t" style="left:7.25px;top:347.62px;font-size:17px;line-height:19.53px;color:#1a1a1a;font-weight:400;">4</div>
<div style="left:0px;top:392px;width:28px;height:1px;background:#d0d0d0;"></div>
<div class="t" style="left:7.25px;top:371.62px;font-size:17px;line-height:19.53px;color:#1a1a1a;font-weight:400;">5</div>
<div style="left:0px;top:416px;width:28px;height:1px;background:#d0d0d0;"></div>
<div class="t" style="left:7.25px;top:395.62px;font-size:17px;line-height:19.53px;color:#1a1a1a;font-weight:400;">6</div>
<div style="left:0px;top:440px;width:28px;height:1px;background:#d0d0d0;"></div>
<div class="t" style="left:7.25px;top:419.62px;font-size:17px;line-height:19.53px;color:#1a1a1a;font-weight:400;">7</div>
<div style="left:0px;top:464px;width:28px;height:1px;background:#d0d0d0;"></div>
<div class="t" style="left:7.25px;top:443.62px;font-size:17px;line-height:19.53px;color:#1a1a1a;font-weight:400;">8</div>
<div style="left:0px;top:488px;width:28px;height:1px;background:#d0d0d0;"></div>
<div class="t" style="left:7.25px;top:467.62px;font-size:17px;line-height:19.53px;color:#1a1a1a;font-weight:400;">9</div>
<div style="left:0px;top:512px;width:28px;height:1px;background:#d0d0d0;"></div>
<div class="t" style="left:2.55px;top:491.62px;font-size:17px;line-height:19.53px;color:#1a1a1a;font-weight:400;">10</div>
<div style="left:0px;top:536px;width:28px;height:1px;background:#d0d0d0;"></div>
<div class="t" style="left:3.20px;top:515.62px;font-size:17px;line-height:19.53px;color:#1a1a1a;font-weight:400;">11</div>
<div style="left:0px;top:560px;width:28px;height:1px;background:#d0d0d0;"></div>
<div class="t" style="left:2.55px;top:539.62px;font-size:17px;line-height:19.53px;color:#1a1a1a;font-weight:400;">12</div>
<div style="left:0px;top:584px;width:28px;height:1px;background:#d0d0d0;"></div>
<div class="t" style="left:2.55px;top:563.62px;font-size:17px;line-height:19.53px;color:#1a1a1a;font-weight:400;">13</div>
<div style="left:0px;top:608px;width:28px;height:1px;background:#d0d0d0;"></div>
<div class="t" style="left:2.55px;top:587.62px;font-size:17px;line-height:19.53px;color:#1a1a1a;font-weight:400;">14</div>
<div style="left:0px;top:632px;width:28px;height:1px;background:#d0d0d0;"></div>
<div class="t" style="left:2.55px;top:611.62px;font-size:17px;line-height:19.53px;color:#1a1a1a;font-weight:400;">15</div>
<div style="left:0px;top:656px;width:28px;height:1px;background:#d0d0d0;"></div>
<div class="t" style="left:2.55px;top:635.62px;font-size:17px;line-height:19.53px;color:#1a1a1a;font-weight:400;">16</div>
<div style="left:0px;top:680px;width:28px;height:1px;background:#d0d0d0;"></div>
<div class="t" style="left:2.55px;top:659.62px;font-size:17px;line-height:19.53px;color:#1a1a1a;font-weight:400;">17</div>
<div style="left:0px;top:704px;width:28px;height:1px;background:#d0d0d0;"></div>
<div class="t" style="left:2.55px;top:683.62px;font-size:17px;line-height:19.53px;color:#1a1a1a;font-weight:400;">18</div>
<div style="left:0px;top:728px;width:28px;height:1px;background:#d0d0d0;"></div>
<div class="t" style="left:2.55px;top:707.62px;font-size:17px;line-height:19.53px;color:#1a1a1a;font-weight:400;">19</div>
<div style="left:0px;top:752px;width:28px;height:1px;background:#d0d0d0;"></div>
<div class="t" style="left:2.55px;top:731.62px;font-size:17px;line-height:19.53px;color:#1a1a1a;font-weight:400;">20</div>
<div style="left:0px;top:776px;width:28px;height:1px;background:#d0d0d0;"></div>
<div class="t" style="left:2.55px;top:755.62px;font-size:17px;line-height:19.53px;color:#1a1a1a;font-weight:400;">21</div>
<div style="left:0px;top:800px;width:28px;height:1px;background:#d0d0d0;"></div>
<div class="t" style="left:2.55px;top:779.62px;font-size:17px;line-height:19.53px;color:#1a1a1a;font-weight:400;">22</div>
<div style="left:0px;top:824px;width:28px;height:1px;background:#d0d0d0;"></div>
<div class="t" style="left:2.55px;top:803.62px;font-size:17px;line-height:19.53px;color:#1a1a1a;font-weight:400;">23</div>
<div style="left:0px;top:848px;width:28px;height:1px;background:#d0d0d0;"></div>
<div class="t" style="left:2.55px;top:827.62px;font-size:17px;line-height:19.53px;color:#1a1a1a;font-weight:400;">24</div>
<div style="left:0px;top:872px;width:28px;height:1px;background:#d0d0d0;"></div>
<div class="t" style="left:2.55px;top:851.62px;font-size:17px;line-height:19.53px;color:#1a1a1a;font-weight:400;">25</div>
<div style="left:0px;top:896px;width:28px;height:1px;background:#d0d0d0;"></div>
<div class="t" style="left:2.55px;top:875.62px;font-size:17px;line-height:19.53px;color:#1a1a1a;font-weight:400;">26</div>
<div style="left:0px;top:920px;width:28px;height:1px;background:#d0d0d0;"></div>
<div class="t" style="left:2.55px;top:899.62px;font-size:17px;line-height:19.53px;color:#1a1a1a;font-weight:400;">27</div>
<div style="left:0px;top:944px;width:28px;height:1px;background:#d0d0d0;"></div>
<div class="t" style="left:2.55px;top:923.62px;font-size:17px;line-height:19.53px;color:#1a1a1a;font-weight:400;">28</div>
<div style="left:1889px;top:272px;width:1px;height:658px;background:#ababab;"></div>
<div style="left:52px;top:289px;width:885px;height:361px;background:#fff;border:1px solid #d9d9d9;"></div>
<div style="left:65px;top:299px;width:141px;height:22px;background:linear-gradient(#e6e6e6,#c9c9c9);"></div>
<div class="t" style="left:69.00px;top:303.24px;font-size:13px;line-height:14.94px;color:#1a1a1a;font-weight:400;transform:scaleX(1.0070);transform-origin:0 0;">Sum of Total Revenue</div>
<div class="t" style="left:66.00px;top:332.03px;font-size:14px;line-height:16.09px;color:#595959;font-weight:400;transform:scaleX(0.9705);transform-origin:0 0;">$600,000,000.00</div>
<div style="left:186px;top:340px;width:456px;height:1px;background:#d9d9d9;"></div>
<div class="t" style="left:66.00px;top:371.43px;font-size:14px;line-height:16.09px;color:#595959;font-weight:400;transform:scaleX(0.9705);transform-origin:0 0;">$500,000,000.00</div>
<div style="left:186px;top:380px;width:456px;height:1px;background:#d9d9d9;"></div>
<div class="t" style="left:66.00px;top:410.93px;font-size:14px;line-height:16.09px;color:#595959;font-weight:400;transform:scaleX(0.9705);transform-origin:0 0;">$400,000,000.00</div>
<div style="left:186px;top:419px;width:456px;height:1px;background:#d9d9d9;"></div>
<div class="t" style="left:66.00px;top:450.33px;font-size:14px;line-height:16.09px;color:#595959;font-weight:400;transform:scaleX(0.9705);transform-origin:0 0;">$300,000,000.00</div>
<div style="left:186px;top:458px;width:456px;height:1px;background:#d9d9d9;"></div>
<div class="t" style="left:66.00px;top:489.83px;font-size:14px;line-height:16.09px;color:#595959;font-weight:400;transform:scaleX(0.9705);transform-origin:0 0;">$200,000,000.00</div>
<div style="left:186px;top:498px;width:456px;height:1px;background:#d9d9d9;"></div>
<div class="t" style="left:66.00px;top:529.23px;font-size:14px;line-height:16.09px;color:#595959;font-weight:400;transform:scaleX(0.9705);transform-origin:0 0;">$100,000,000.00</div>
<div style="left:186px;top:537px;width:456px;height:1px;background:#d9d9d9;"></div>
<div class="t" style="left:149.40px;top:568.83px;font-size:14px;line-height:16.09px;color:#595959;font-weight:400;transform:scaleX(0.9839);transform-origin:0 0;">$-</div>
<div style="left:186px;top:577px;width:456px;height:1px;background:#d9d9d9;"></div>
<div class="t" style="left:198.70px;top:589.24px;font-size:13px;line-height:14.94px;color:#595959;font-weight:400;transform:scaleX(1.0381);transform-origin:0 0;">2010</div>
<div class="t" style="left:255.70px;top:589.24px;font-size:13px;line-height:14.94px;color:#595959;font-weight:400;transform:scaleX(1.0714);transform-origin:0 0;">2011</div>
<div class="t" style="left:312.80px;top:589.24px;font-size:13px;line-height:14.94px;color:#595959;font-weight:400;transform:scaleX(1.0381);transform-origin:0 0;">2012</div>
<div class="t" style="left:369.80px;top:589.24px;font-size:13px;line-height:14.94px;color:#595959;font-weight:400;transform:scaleX(1.0381);transform-origin:0 0;">2013</div>
<div class="t" style="left:427.00px;top:589.24px;font-size:13px;line-height:14.94px;color:#595959;font-weight:400;transform:scaleX(1.0381);transform-origin:0 0;">2014</div>
<div class="t" style="left:484.00px;top:589.24px;font-size:13px;line-height:14.94px;color:#595959;font-weight:400;transform:scaleX(1.0381);transform-origin:0 0;">2015</div>
<div class="t" style="left:541.10px;top:589.24px;font-size:13px;line-height:14.94px;color:#595959;font-weight:400;transform:scaleX(1.0381);transform-origin:0 0;">2016</div>
<div class="t" style="left:598.10px;top:589.24px;font-size:13px;line-height:14.94px;color:#595959;font-weight:400;transform:scaleX(1.0381);transform-origin:0 0;">2017</div>
<svg style="left:186px;top:330px;" width="460" height="250" viewBox="0 0 460 250"><polyline points="27.7,209.7 84.7,193.9 141.8,197.8 198.8,183.9 256.0,190.4 313.0,178.0 370.1,193.0 427.1,215.0" fill="none" stroke="#ed7d31" stroke-width="4" stroke-linejoin="round" stroke-linecap="round"/><polyline points="27.7,186.0 84.7,175.4 141.8,174.6 198.8,169.3 256.0,175.4 313.0,159.5 370.1,178.0 427.1,207.0" fill="none" stroke="#a5a5a5" stroke-width="4" stroke-linejoin="round" stroke-linecap="round"/><polyline points="27.7,232.7 84.7,227.4 141.8,225.5 198.8,234.2 256.0,221.5 313.0,232.6 370.1,234.2 427.1,235.5" fill="none" stroke="#70ad47" stroke-width="4" stroke-linejoin="round" stroke-linecap="round"/><polyline points="27.7,143.0 84.7,124.8 141.8,152.5 198.8,139.8 256.0,137.7 313.0,145.6 370.1,145.0 427.1,195.1" fill="none" stroke="#4472c4" stroke-width="4" stroke-linejoin="round" stroke-linecap="round"/><polyline points="27.7,164.9 84.7,168.8 141.8,150.4 198.8,151.7 256.0,150.3 313.0,156.9 370.1,153.0 427.1,204.4" fill="none" stroke="#5b9bd5" stroke-width="4" stroke-linejoin="round" stroke-linecap="round"/><polyline points="27.7,94.4 84.7,48.0 141.8,63.3 198.8,54.6 256.0,79.9 313.0,55.4 370.1,74.4 427.1,130.5" fill="none" stroke="#ffc000" stroke-width="4" stroke-linejoin="round" stroke-linecap="round"/><polyline points="27.7,73.9 84.7,66.0 141.8,92.9 198.8,84.4 256.0,43.5 313.0,62.0 370.1,78.6 427.1,151.6" fill="none" stroke="#264478" stroke-width="4" stroke-linejoin="round" stroke-linecap="round"/></svg>
<div style="left:65px;top:616px;width:59px;height:22px;background:linear-gradient(#e6e6e6,#c9c9c9);"></div>
<div class="t" style="left:69.00px;top:620.24px;font-size:13px;line-height:14.94px;color:#1a1a1a;font-weight:400;transform:scaleX(1.0061);transform-origin:0 0;">Years</div>
<svg style="left:110px;top:623px;" width="10" height="6" viewBox="0 0 10 6"><path d="M0.5 0.5 H9 L4.75 5.5 Z" fill="#333"/></svg>
<div style="left:125px;top:616px;width:78px;height:22px;background:linear-gradient(#e6e6e6,#c9c9c9);"></div>
<div class="t" style="left:129.00px;top:620.24px;font-size:13px;line-height:14.94px;color:#1a1a1a;font-weight:400;transform:scaleX(1.0672);transform-origin:0 0;">Quarters</div>
<svg style="left:189px;top:623px;" width="10" height="6" viewBox="0 0 10 6"><path d="M0.5 0.5 H9 L4.75 5.5 Z" fill="#333"/></svg>
<div style="left:204px;top:616px;width:93px;height:22px;background:linear-gradient(#e6e6e6,#c9c9c9);"></div>
<div class="t" style="left:208.00px;top:620.24px;font-size:13px;line-height:14.94px;color:#1a1a1a;font-weight:400;">Order Date</div>
<svg style="left:283px;top:623px;" width="10" height="6" viewBox="0 0 10 6"><path d="M0.5 0.5 H9 L4.75 5.5 Z" fill="#333"/></svg>
<div style="left:661px;top:360px;width:263px;height:22px;background:linear-gradient(#e6e6e6,#c9c9c9);"></div>
<div class="t" style="left:665.00px;top:364.24px;font-size:13px;line-height:14.94px;color:#1a1a1a;font-weight:400;transform:scaleX(0.9345);transform-origin:0 0;">Region</div>
<svg style="left:908px;top:369px;" width="11" height="6" viewBox="0 0 11 6"><path d="M0.5 0.5 H10 L5.25 5.5 Z" fill="#222"/></svg>
<div style="left:666px;top:395px;width:35px;height:4px;background:#4472c4;border-radius:2px;"></div>
<div class="t" style="left:703.00px;top:390.04px;font-size:13px;line-height:14.94px;color:#595959;font-weight:400;transform:scaleX(0.9449);transform-origin:0 0;">Asia</div>
<div style="left:666px;top:423px;width:35px;height:4px;background:#ed7d31;border-radius:2px;"></div>
<div class="t" style="left:703.00px;top:418.24px;font-size:13px;line-height:14.94px;color:#595959;font-weight:400;transform:scaleX(1.0312);transform-origin:0 0;">Australia and Oceania</div>
<div style="left:666px;top:451px;width:35px;height:4px;background:#a5a5a5;border-radius:2px;"></div>
<div class="t" style="left:703.00px;top:446.24px;font-size:13px;line-height:14.94px;color:#595959;font-weight:400;transform:scaleX(1.0487);transform-origin:0 0;">Central America and the Caribbean</div>
<div style="left:666px;top:479px;width:35px;height:4px;background:#ffc000;border-radius:2px;"></div>
<div class="t" style="left:703.00px;top:473.84px;font-size:13px;line-height:14.94px;color:#595959;font-weight:400;transform:scaleX(1.0263);transform-origin:0 0;">Europe</div>
<div style="left:666px;top:506px;width:35px;height:4px;background:#5b9bd5;border-radius:2px;"></div>
<div class="t" style="left:703.00px;top:501.74px;font-size:13px;line-height:14.94px;color:#595959;font-weight:400;transform:scaleX(1.0619);transform-origin:0 0;">Middle East and North Africa</div>
<div style="left:666px;top:534px;width:35px;height:4px;background:#70ad47;border-radius:2px;"></div>
<div class="t" style="left:703.00px;top:529.63px;font-size:13px;line-height:14.94px;color:#595959;font-weight:400;transform:scaleX(1.0680);transform-origin:0 0;">North America</div>
<div style="left:666px;top:563px;width:35px;height:4px;background:#264478;border-radius:2px;"></div>
<div class="t" style="left:703.00px;top:558.24px;font-size:13px;line-height:14.94px;color:#595959;font-weight:400;transform:scaleX(1.0195);transform-origin:0 0;">Sub-Saharan Africa</div>
<div style="left:883px;top:617px;width:19px;height:21px;background:linear-gradient(#e4e4e4,#cdcdcd);"></div>
<div style="left:903px;top:617px;width:19px;height:21px;background:linear-gradient(#e4e4e4,#cdcdcd);"></div>
<svg style="left:886px;top:620px;" width="13" height="14" viewBox="0 0 13 14"><path d="M6.5 2 V12 M1.5 7 H11.5" stroke="#555" stroke-width="2"/></svg>
<svg style="left:906px;top:620px;" width="13" height="14" viewBox="0 0 13 14"><path d="M1.5 7 H11.5" stroke="#555" stroke-width="2"/></svg>
<div style="left:50px;top:687px;width:890px;height:260px;background:#fff;border:1px solid #d9d9d9;"></div>
<div style="left:63px;top:697px;width:141px;height:22px;background:linear-gradient(#e6e6e6,#c9c9c9);"></div>
<div class="t" style="left:67.00px;top:701.24px;font-size:13px;line-height:14.94px;color:#1a1a1a;font-weight:400;transform:scaleX(1.0070);transform-origin:0 0;">Sum of Total Revenue</div>
<div class="t" style="left:64.00px;top:729.73px;font-size:14px;line-height:16.09px;color:#595959;font-weight:400;transform:scaleX(0.9705);transform-origin:0 0;">$500,000,000.00</div>
<div style="left:184px;top:738px;width:607px;height:1px;background:#d9d9d9;"></div>
<div class="t" style="left:64.00px;top:759.03px;font-size:14px;line-height:16.09px;color:#595959;font-weight:400;transform:scaleX(0.9705);transform-origin:0 0;">$450,000,000.00</div>
<div style="left:184px;top:767px;width:607px;height:1px;background:#d9d9d9;"></div>
<div class="t" style="left:64.00px;top:788.23px;font-size:14px;line-height:16.09px;color:#595959;font-weight:400;transform:scaleX(0.9705);transform-origin:0 0;">$400,000,000.00</div>
<div style="left:184px;top:796px;width:607px;height:1px;background:#d9d9d9;"></div>
<div class="t" style="left:64.00px;top:817.43px;font-size:14px;line-height:16.09px;color:#595959;font-weight:400;transform:scaleX(0.9705);transform-origin:0 0;">$350,000,000.00</div>
<div style="left:184px;top:826px;width:607px;height:1px;background:#d9d9d9;"></div>
<div class="t" style="left:64.00px;top:846.63px;font-size:14px;line-height:16.09px;color:#595959;font-weight:400;transform:scaleX(0.9705);transform-origin:0 0;">$300,000,000.00</div>
<div style="left:184px;top:855px;width:607px;height:1px;background:#d9d9d9;"></div>
<div class="t" style="left:64.00px;top:875.93px;font-size:14px;line-height:16.09px;color:#595959;font-weight:400;transform:scaleX(0.9705);transform-origin:0 0;">$250,000,000.00</div>
<div style="left:184px;top:884px;width:607px;height:1px;background:#d9d9d9;"></div>
<div class="t" style="left:64.00px;top:905.03px;font-size:14px;line-height:16.09px;color:#595959;font-weight:400;transform:scaleX(0.9705);transform-origin:0 0;">$200,000,000.00</div>
<div style="left:184px;top:913px;width:607px;height:1px;background:#d9d9d9;"></div>
<svg style="left:184px;top:700px;" width="620" height="229" viewBox="0 0 620 229"><rect x="27.0" y="187.0" width="4.6" height="42.0" fill="#5b9bd5"/><rect x="38.5" y="125.2" width="4.6" height="103.8" fill="#264478"/><rect x="44.2" y="224.0" width="4.6" height="5.0" fill="#9e480e"/><rect x="49.8" y="164.8" width="4.6" height="64.2" fill="#636363"/><rect x="103.0" y="213.0" width="4.6" height="16.0" fill="#5b9bd5"/><rect x="114.5" y="90.0" width="4.6" height="139.0" fill="#264478"/><rect x="120.2" y="190.0" width="4.6" height="39.0" fill="#9e480e"/><rect x="125.8" y="88.0" width="4.6" height="141.0" fill="#636363"/><rect x="179.3" y="189.0" width="4.6" height="40.0" fill="#5b9bd5"/><rect x="190.8" y="135.0" width="4.6" height="94.0" fill="#264478"/><rect x="196.5" y="195.0" width="4.6" height="34.0" fill="#9e480e"/><rect x="202.1" y="124.0" width="4.6" height="105.0" fill="#636363"/><rect x="255.0" y="185.0" width="4.6" height="44.0" fill="#5b9bd5"/><rect x="266.5" y="75.2" width="4.6" height="153.8" fill="#264478"/><rect x="272.2" y="205.0" width="4.6" height="24.0" fill="#9e480e"/><rect x="277.8" y="150.0" width="4.6" height="79.0" fill="#636363"/><rect x="331.0" y="192.0" width="4.6" height="37.0" fill="#5b9bd5"/><rect x="342.5" y="100.0" width="4.6" height="129.0" fill="#264478"/><rect x="348.2" y="194.7" width="4.6" height="34.3" fill="#9e480e"/><rect x="353.8" y="91.0" width="4.6" height="138.0" fill="#636363"/><rect x="407.0" y="175.0" width="4.6" height="54.0" fill="#5b9bd5"/><rect x="418.5" y="88.0" width="4.6" height="141.0" fill="#264478"/><rect x="424.2" y="194.0" width="4.6" height="35.0" fill="#9e480e"/><rect x="429.8" y="116.0" width="4.6" height="113.0" fill="#636363"/><rect x="483.0" y="202.8" width="4.6" height="26.2" fill="#5b9bd5"/><rect x="494.5" y="108.8" width="4.6" height="120.2" fill="#264478"/><rect x="500.2" y="206.8" width="4.6" height="22.2" fill="#9e480e"/><rect x="505.8" y="131.0" width="4.6" height="98.0" fill="#636363"/><rect x="570.5" y="226.7" width="4.6" height="2.3" fill="#264478"/><rect x="581.8" y="211.0" width="4.6" height="18.0" fill="#636363"/></svg>
<div style="left:811px;top:757px;width:116px;height:22px;background:linear-gradient(#e6e6e6,#c9c9c9);"></div>
<div class="t" style="left:815.00px;top:761.24px;font-size:13px;line-height:14.94px;color:#1a1a1a;font-weight:400;transform:scaleX(1.0563);transform-origin:0 0;">Item Type</div>
<svg style="left:910px;top:766px;" width="11" height="6" viewBox="0 0 11 6"><path d="M0.5 0.5 H10 L5.25 5.5 Z" fill="#222"/></svg>
<div style="left:817px;top:790px;width:8.5px;height:8.5px;background:#4472c4;"></div>
<div class="t" style="left:829.70px;top:786.74px;font-size:13px;line-height:14.94px;color:#595959;font-weight:400;">Baby Food</div>
<div style="left:817px;top:818px;width:8.5px;height:8.5px;background:#ed7d31;"></div>
<div class="t" style="left:829.70px;top:814.74px;font-size:13px;line-height:14.94px;color:#595959;font-weight:400;">Beverages</div>
<div style="left:817px;top:846px;width:8.5px;height:8.5px;background:#a5a5a5;"></div>
<div class="t" style="left:829.70px;top:842.74px;font-size:13px;line-height:14.94px;color:#595959;font-weight:400;transform:scaleX(0.9922);transform-origin:0 0;">Cereal</div>
<div style="left:817px;top:874px;width:8.5px;height:8.5px;background:#ffc000;"></div>
<div class="t" style="left:829.70px;top:870.74px;font-size:13px;line-height:14.94px;color:#595959;font-weight:400;transform:scaleX(1.0431);transform-origin:0 0;">Clothes</div>
<div style="left:817px;top:902px;width:8.5px;height:8.5px;background:#5b9bd5;"></div>
<div class="t" style="left:829.70px;top:898.74px;font-size:13px;line-height:14.94px;color:#595959;font-weight:400;transform:scaleX(1.0132);transform-origin:0 0;">Cosmetics</div>
<div style="left:961px;top:295px;width:242px;height:325px;background:#fff;border:2px solid #7088b0;"></div>
<div class="t" style="left:972.80px;top:304.23px;font-size:15px;line-height:17.23px;color:#111;font-weight:700;transform:scaleX(0.9843);transform-origin:0 0;">Region</div>
<svg style="left:1125px;top:301px;" width="23" height="20" viewBox="0 0 23 20"><path d="M1 4 L3 6 L6.5 2 M1 10 L3 12 L6.5 8 M1 16 L3 18 L6.5 14" fill="none" stroke="#333" stroke-width="1.6"/>
<path d="M9 4.5 H22 M9 10.5 H22 M9 16.5 H22" stroke="#333" stroke-width="1.7"/></svg>
<svg style="left:1164px;top:301px;" width="24" height="22" viewBox="0 0 24 22"><path d="M1.5 1.5 H21 V3.5 L13.5 11 V20 L9.5 17 V11 L1.5 3.5 Z" fill="#ececec" stroke="#b8b8b8" stroke-width="1.4"/>
<path d="M15 14 L21 20 M21 14 L15 20" stroke="#b8b8b8" stroke-width="1.3"/></svg>
<div style="left:972px;top:328px;width:218px;height:1px;background:#8e9ab0;"></div>
<div style="left:972px;top:334px;width:218px;height:30px;background:#b4c6e7;border:1px solid #a5acb8;border-radius:3px;"></div>
<div class="t" style="left:983.00px;top:341.43px;font-size:15px;line-height:17.23px;color:#1a1a1a;font-weight:400;transform:scaleX(0.9932);transform-origin:0 0;">Asia</div>
<div style="left:972px;top:369px;width:218px;height:30px;background:#b4c6e7;border:1px solid #a5acb8;border-radius:3px;"></div>
<div class="t" style="left:983.00px;top:376.43px;font-size:15px;line-height:17.23px;color:#1a1a1a;font-weight:400;transform:scaleX(1.0738);transform-origin:0 0;">Australia and Oceania</div>
<div style="left:972px;top:404px;width:218px;height:30px;background:#b4c6e7;border:1px solid #a5acb8;border-radius:3px;"></div>
<div class="t" style="left:983.00px;top:411.43px;font-size:15px;line-height:17.23px;color:#1a1a1a;font-weight:400;transform:scaleX(1.0923);transform-origin:0 0;">Central America and the ...</div>
<div style="left:972px;top:439px;width:218px;height:30px;background:#b4c6e7;border:1px solid #a5acb8;border-radius:3px;"></div>
<div class="t" style="left:983.00px;top:446.43px;font-size:15px;line-height:17.23px;color:#1a1a1a;font-weight:400;transform:scaleX(1.0537);transform-origin:0 0;">Europe</div>
<div style="left:972px;top:474px;width:218px;height:30px;background:#b4c6e7;border:1px solid #a5acb8;border-radius:3px;"></div>
<div class="t" style="left:983.00px;top:481.43px;font-size:15px;line-height:17.23px;color:#1a1a1a;font-weight:400;transform:scaleX(1.0958);transform-origin:0 0;">Middle East and North A...</div>
<div style="left:972px;top:509px;width:218px;height:30px;background:#b4c6e7;border:1px solid #a5acb8;border-radius:3px;"></div>
<div class="t" style="left:983.00px;top:516.42px;font-size:15px;line-height:17.23px;color:#1a1a1a;font-weight:400;transform:scaleX(1.1209);transform-origin:0 0;">North America</div>
<div style="left:972px;top:544px;width:218px;height:30px;background:#b4c6e7;border:1px solid #a5acb8;border-radius:3px;"></div>
<div class="t" style="left:983.00px;top:551.42px;font-size:15px;line-height:17.23px;color:#1a1a1a;font-weight:400;transform:scaleX(1.0530);transform-origin:0 0;">Sub-Saharan Africa</div>
<svg style="left:956px;top:289.5px;" width="14" height="14" viewBox="0 0 14 14"><circle cx="7" cy="7" r="5.6" fill="#fff" stroke="#8a8a8a" stroke-width="2"/></svg>
<svg style="left:1075.5px;top:289.5px;" width="14" height="14" viewBox="0 0 14 14"><circle cx="7" cy="7" r="5.6" fill="#fff" stroke="#8a8a8a" stroke-width="2"/></svg>
<svg style="left:1195.5px;top:289.5px;" width="14" height="14" viewBox="0 0 14 14"><circle cx="7" cy="7" r="5.6" fill="#fff" stroke="#8a8a8a" stroke-width="2"/></svg>
<svg style="left:956px;top:450.5px;" width="14" height="14" viewBox="0 0 14 14"><circle cx="7" cy="7" r="5.6" fill="#fff" stroke="#8a8a8a" stroke-width="2"/></svg>
<svg style="left:1195.5px;top:450.5px;" width="14" height="14" viewBox="0 0 14 14"><circle cx="7" cy="7" r="5.6" fill="#fff" stroke="#8a8a8a" stroke-width="2"/></svg>
<svg style="left:956px;top:612.5px;" width="14" height="14" viewBox="0 0 14 14"><circle cx="7" cy="7" r="5.6" fill="#fff" stroke="#8a8a8a" stroke-width="2"/></svg>
<svg style="left:1075.5px;top:612.5px;" width="14" height="14" viewBox="0 0 14 14"><circle cx="7" cy="7" r="5.6" fill="#fff" stroke="#8a8a8a" stroke-width="2"/></svg>
<svg style="left:1195.5px;top:612.5px;" width="14" height="14" viewBox="0 0 14 14"><circle cx="7" cy="7" r="5.6" fill="#fff" stroke="#8a8a8a" stroke-width="2"/></svg>
<div style="left:0px;top:929px;width:1915px;height:29px;background:#e6e6e6;border-top:1px solid #c6c6c6;"></div>
<div style="left:0px;top:958px;width:1915px;height:28px;background:#f3f2f1;border-top:1px solid #d6d6d6;"></div>
<div style="left:0px;top:985px;width:1915px;height:1px;background:#161a24;"></div>
<div style="left:55px;top:985px;width:430px;height:1px;background:#c4c4c4;"></div>
<div style="left:1893px;top:251px;width:19px;height:19px;background:#fff;border:1px solid #c6c6c6;"></div>
<svg style="left:1897px;top:257px;" width="11" height="7" viewBox="0 0 11 7"><path d="M0.5 6.5 H10.5 L5.5 1 Z" fill="#777"/></svg>
<div style="left:1893px;top:271px;width:19px;height:615px;background:#fff;border:1px solid #c6c6c6;"></div>
<div style="left:1894px;top:886px;width:17px;height:25px;background:#dadada;"></div>
<div style="left:1893px;top:911px;width:19px;height:19px;background:#fff;border:1px solid #c6c6c6;"></div>
<svg style="left:1897px;top:918px;" width="11" height="7" viewBox="0 0 11 7"><path d="M0.5 0.5 H10.5 L5.5 6 Z" fill="#777"/></svg>
<svg style="left:20px;top:938px;" width="10" height="11" viewBox="0 0 10 11"><path d="M8 1 V10 L2.5 5.5 Z" fill="#c0c0c0"/></svg>
<svg style="left:48px;top:938px;" width="10" height="11" viewBox="0 0 10 11"><path d="M2 1 V10 L7.5 5.5 Z" fill="#c0c0c0"/></svg>
<div style="left:98px;top:929px;width:112px;height:27px;background:#fff;border-left:1px solid #c6c6c6;border-right:1px solid #c6c6c6;"></div>
<div style="left:98px;top:953px;width:112px;height:2px;background:#217346;"></div>
<div class="t" style="left:110.80px;top:931.52px;font-size:16px;line-height:18.38px;color:#217346;font-weight:700;transform:scaleX(1.0227);transform-origin:0 0;">Dashboard</div>
<div class="t" style="left:222.00px;top:931.52px;font-size:16px;line-height:18.38px;color:#444;font-weight:400;transform:scaleX(1.0059);transform-origin:0 0;">Sheet1</div>
<div style="left:288px;top:933px;width:1px;height:21px;background:#bdbdbd;"></div>
<div class="t" style="left:302.50px;top:931.52px;font-size:16px;line-height:18.38px;color:#444;font-weight:400;transform:scaleX(0.9856);transform-origin:0 0;">Sales Records</div>
<div style="left:419px;top:933px;width:1px;height:21px;background:#bdbdbd;"></div>
<svg style="left:452px;top:933px;" width="22" height="22" viewBox="0 0 22 22"><circle cx="11" cy="11" r="9.5" fill="none" stroke="#7a7a7a" stroke-width="1.3"/><path d="M11 6 V16 M6 11 H16" stroke="#7a7a7a" stroke-width="1.4"/></svg>
<div style="left:1144px;top:937px;width:3px;height:3px;background:#a8a8a8;"></div>
<div style="left:1144px;top:942px;width:3px;height:3px;background:#a8a8a8;"></div>
<div style="left:1144px;top:947px;width:3px;height:3px;background:#a8a8a8;"></div>
<div style="left:1162px;top:934px;width:20px;height:19px;background:#fff;border:1px solid #c6c6c6;"></div>
<svg style="left:1166px;top:938px;" width="8" height="11" viewBox="0 0 8 11"><path d="M7 0.5 V10.5 L1 5.5 Z" fill="#777"/></svg>
<div style="left:1181px;top:934px;width:660px;height:19px;background:#fff;border:1px solid #c6c6c6;"></div>
<div style="left:1841px;top:935px;width:30px;height:17px;background:#dadada;"></div>
<div style="left:1871px;top:934px;width:19px;height:19px;background:#fff;border:1px solid #c6c6c6;"></div>
<svg style="left:1877px;top:938px;" width="8" height="11" viewBox="0 0 8 11"><path d="M1 0.5 V10.5 L7 5.5 Z" fill="#777"/></svg>
<div style="left:1543px;top:958px;width:50px;height:26px;background:#d6d6d6;"></div>
<svg style="left:1558px;top:963px;" width="19" height="18" viewBox="0 0 19 18"><rect x="1" y="1" width="17" height="16" fill="none" stroke="#444" stroke-width="1.5"/><path d="M6.7 1 V17 M12.3 1 V17 M1 6.3 H18 M1 11.7 H18" stroke="#444" stroke-width="1.3"/></svg>
<svg style="left:1608px;top:963px;" width="20" height="18" viewBox="0 0 20 18"><rect x="1" y="1" width="18" height="16" fill="none" stroke="#555" stroke-width="1.3"/><rect x="5" y="4" width="10" height="10" fill="none" stroke="#555" stroke-width="1.1"/><path d="M7 7 H13 M7 9 H13 M7 11 H13" stroke="#555" stroke-width="0.9"/></svg>
<svg style="left:1658px;top:963px;" width="20" height="18" viewBox="0 0 20 18"><rect x="1" y="1" width="18" height="16" fill="none" stroke="#555" stroke-width="1.3"/><path d="M6 1 V9 H13 V1" fill="none" stroke="#555" stroke-width="1.3"/></svg>
<div style="left:1700px;top:971px;width:9px;height:1.5px;background:#555;"></div>
<div style="left:1716px;top:971.5px;width:125px;height:1px;background:#a0a0a0;"></div>
<div style="left:1776px;top:965px;width:6px;height:14px;background:#555;"></div>
<svg style="left:1846px;top:966px;" width="11" height="11" viewBox="0 0 11 11"><path d="M5.5 0 V11 M0 5.5 H11" stroke="#555" stroke-width="1.4"/></svg>
<div class="t" style="left:1874.00px;top:966.14px;font-size:12px;line-height:13.79px;color:#444;font-weight:400;transform:scaleX(0.9772);transform-origin:0 0;">100%</div>
</body></html>
